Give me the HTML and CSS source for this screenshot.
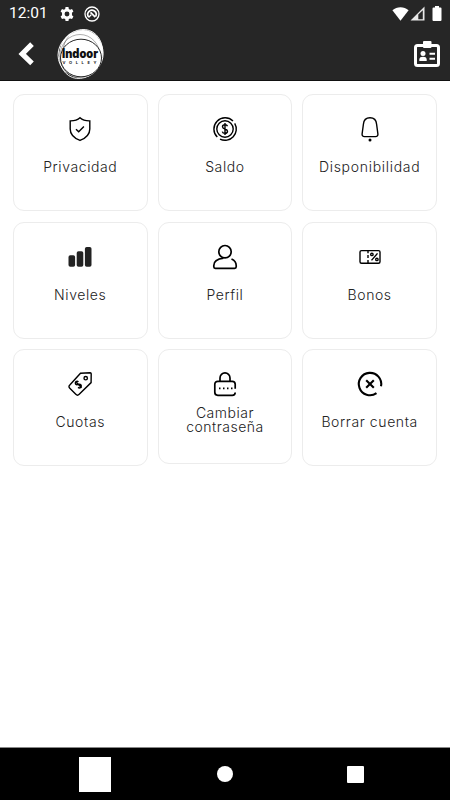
FILE: index.html
```html
<!DOCTYPE html>
<html lang="es">
<head>
    <meta charset="UTF-8">
    <meta name="viewport" content="width=device-width, initial-scale=1.0">
    <title>Indoor</title>
    <link rel="stylesheet" href="styles.css">
</head>
<body>
    <div class="screen">
        <header class="header">
            <!-- Status bar -->
            <div class="status">
                <span class="time">12:01</span>
                <svg class="status-gear" width="14" height="14" viewBox="0 0 24 24"><path fill="#fff" fill-rule="evenodd" d="M9.5 0h5l.6 3.300 2.200 1.200 3.300-1.200L23 7.600l-2.500 2.200v4.400L23 16.400l-2.400 4.300-3.300-1.200-2.200 1.200-.6 3.300h-5l-.6-3.300-2.200-1.200-3.300 1.200L1 16.400l2.500-2.200V9.800L1 7.600l2.400-4.300 3.300 1.200 2.200-1.200zM12 7.800a4.200 4.200 0 1 0 0 8.400 4.200 4.200 0 0 0 0-8.400z"/></svg>
                <svg class="status-dnd" width="16" height="16" viewBox="0 0 16 16" fill="none" stroke="#fff"><circle cx="8" cy="8" r="7" stroke-width="1.300"/><path stroke-width="1.700" d="M4.800 11.200a4.200 4.200 0 1 1 6.900-.8M6.500 6.300l4.800 4.900"/><path stroke-width="1.300" d="M4.800 11.200l2.400-2.400"/></svg>
                <span class="spacer"></span>
                <svg width="17" height="14" viewBox="0 0 17 14"><path fill="#fff" d="M.4 3.300C5-.7 12-.7 16.600 3.300L8.500 13.800z"/></svg>
                <svg class="status-signal" width="15" height="15" viewBox="0 0 15 15"><path fill="#e8e8e8" fill-rule="evenodd" d="M.5 14.500l14-14v14zM8.300 8.500v4.700h4.500V4.200z"/></svg>
                <svg class="status-battery" width="10" height="15" viewBox="0 0 10 15"><path fill="#fff" d="M3 0h4v1.500h1.500a1 1 0 0 1 1 1V14a1 1 0 0 1-1 1h-7a1 1 0 0 1-1-1V2.500a1 1 0 0 1 1-1H3z"/></svg>
            </div>

            <!-- Navigation -->
            <div class="navbar">
                <svg class="back" width="16" height="24" viewBox="0 0 16 24"><path d="M14 2.200L4.200 12l9.800 9.300" fill="none" stroke="#fff" stroke-width="5.200"/></svg>
                <svg class="logo" width="48" height="52" viewBox="0 0 48 52">
                    <ellipse cx="24" cy="26" rx="21.500" ry="24" fill="#fff"/>
                    <ellipse cx="26" cy="24" rx="20" ry="22.500" fill="#fff" stroke="#555" stroke-width=".6"/>
                    <ellipse cx="23.500" cy="26" rx="22.800" ry="22" fill="none" stroke="#fff" stroke-width=".9" transform="rotate(-35 24 26)"/>
                    <ellipse cx="24" cy="26" rx="21" ry="25" fill="none" stroke="#fff" stroke-width=".8" transform="rotate(20 24 26)"/>
                    <ellipse cx="23" cy="28" rx="20" ry="21.500" fill="none" stroke="#777" stroke-width=".6"/>
                    <ellipse cx="24" cy="30" rx="20.500" ry="18.800" fill="#fff" stroke="#262626" stroke-width="1"/>
                    <text class="logo-name" x="5" y="29.500" textLength="36" lengthAdjust="spacingAndGlyphs">Indoor</text>
                    <text class="logo-sub" x="5.500" y="36" textLength="34">VOLLEY</text>
                </svg>
                <span class="spacer"></span>
                <svg class="badge" width="26" height="26" viewBox="0 0 26 26">
                    <rect x="1.500" y="4.500" width="23" height="20" rx="2" fill="none" stroke="#fff" stroke-width="3"/>
                    <rect x="9" y="0" width="8.500" height="7" rx="1" fill="#fff"/>
                    <circle cx="9" cy="12.500" r="2.500" fill="#fff"/>
                    <path d="M5.300 20v-1.500c0-2 1.700-2.700 3.700-2.700s3.700.7 3.700 2.700V20z" fill="#fff"/>
                    <path d="M15.500 12.800h5.500M15.500 17.800h5.500" stroke="#fff" stroke-width="2"/>
                </svg>
            </div>
        </header>

        <!-- Menu -->
        <main class="menu">
            <div class="card">
                <svg class="icon" viewBox="0 0 24 24"><path d="M12 .8c2.600 2.400 6 3.200 9.800 3.100v8c0 5-3.800 9.100-9.800 11.500C6 21 2.200 16.900 2.200 11.900v-8C6 4 9.400 3.200 12 .8z"/><path d="M8 12.200l2.700 2.600 5.200-5.200"/></svg>
                <span class="label">Privacidad</span>
            </div>
            <div class="card">
                <svg class="icon" viewBox="0 0 24 24"><circle cx="12" cy="12" r="8.200"/><path d="M4.300 20.100A11.200 11.200 0 0 1 20 4M21.700 6.400A11.200 11.200 0 0 1 7 22.100"/><path d="M14.500 9.200c-.3-1-1.300-1.500-2.500-1.500-1.500 0-2.500.8-2.500 2 0 3 5 1.600 5 4.500 0 1.300-1 2.100-2.500 2.100-1.300 0-2.400-.6-2.700-1.700M12 6v12"/></svg>
                <span class="label">Saldo</span>
            </div>
            <div class="card">
                <svg class="icon" viewBox="0 0 24 24"><path d="M12 .8c-4 0-6.300 2.700-6.600 6.500L4.100 17c-.2 1.600.7 2.600 2.300 2.600h11.200c1.600 0 2.500-1 2.300-2.600l-1.300-9.700C18.300 3.500 16 .8 12 .8z"/><circle class="fill" cx="12" cy="23" r="1.500"/></svg>
                <span class="label wide">Disponibilidad</span>
            </div>
            <div class="card">
                <svg class="icon bars" viewBox="0 0 24 24"><rect x=".5" y="10.300" width="6.600" height="11.500" rx="1.800"/><rect x="8.700" y="6.200" width="6.600" height="15.600" rx="1.800"/><rect x="16.900" y="2" width="6.600" height="19.800" rx="1.800"/></svg>
                <span class="label">Niveles</span>
            </div>
            <div class="card">
                <svg class="icon bold" viewBox="0 0 24 24"><circle cx="12" cy="6.700" r="6.200"/><path d="M10.500 13.100C5 13.700.8 16.300.8 20.500v1.300c0 1 .6 1.500 1.500 1.500h19.400c.9 0 1.500-.5 1.500-1.500v-1.300c0-3-1.700-5.200-4.700-6.500"/></svg>
                <span class="label">Perfil</span>
            </div>
            <div class="card">
                <svg class="icon" viewBox="0 0 24 24"><rect x="2" y="5.600" width="20" height="12.600" rx="1.500"/><path d="M10 5.600v2.600M10 10v3M10 15v3M13.500 15.400l6-7"/><circle cx="13.900" cy="9.400" r="1.200"/><circle cx="18.900" cy="14.400" r="1.200"/></svg>
                <span class="label">Bonos</span>
            </div>
            <div class="card">
                <svg class="icon" viewBox="0 0 24 24"><path d="M12.500 1.200L22.200.8c.7 0 1 .3 1 1l-.1 8.800-11.900 11.700c-1.100 1.100-2.300 1.100-3.400 0l-6-6c-1.100-1.100-1.100-2.300 0-3.400z"/><circle cx="17.700" cy="6.200" r="1.700"/><path d="M10.500 9.700c-1-.7-2-.5-2.600.1-.8.800-.7 1.900.1 2.600 1.500 1.200 3-1.300 4.600.1 1 .9.800 2.100.1 2.800s-1.800.8-2.700.1M7.400 9.200l6.200 6.500"/></svg>
                <span class="label">Cuotas</span>
            </div>
            <div class="card short">
                <svg class="icon bold" viewBox="0 0 24 24"><path d="M7 9.300V5.900a5 5 0 0 1 10 0v3.400M22.200 16.800v-4.500c0-1.800-1.200-3-3-3H4.800c-1.800 0-3 1.200-3 3v8c0 1.800 1.200 3 3 3h14.400c1.800 0 3-1 3-2.800"/><path d="M6 16.300h1.500M10 16.300h1.500M14 16.300h1.500M18 16.300h1.500"/></svg>
                <span class="label two">Cambiar contraseña</span>
            </div>
            <div class="card">
                <svg class="icon heavy" viewBox="0 0 24 24"><path d="M23 14.300A11.200 11.200 0 1 0 18.500 21.200M8.200 8.200l7.600 7.600M15.800 8.200l-7.600 7.600"/></svg>
                <span class="label">Borrar cuenta</span>
            </div>
        </main>

        <!-- Android buttons -->
        <footer class="softkeys">
            <div class="key"><span class="key-back"></span></div>
            <div class="key"><span class="key-home"></span></div>
            <div class="key"><span class="key-recent"></span></div>
        </footer>
    </div>
</body>
</html>
```
FILE: styles.css
```css
body {
    margin: 0;
    background-color: #fff;
    font-family: Inter, sans-serif;
}

.screen {
    display: flex;
    flex-direction: column;
    height: 800px;
}

.header {
    box-sizing: border-box;
    height: 81px;
    background-color: #262626;
    border-bottom: 1px solid #111;
    color: #fff;
}

.spacer {
    flex-grow: 1;
}

.status {
    display: flex;
    align-items: center;
    height: 27px;
    padding: 0 8px 0 9px;
}

.time {
    width: 51px;
    font-family: Roboto, sans-serif;
    font-size: 15.5px;
    line-height: 27px;
}

.status-dnd {
    margin-left: 10px;
}

.status-signal {
    margin-left: 1px;
}

.status-battery {
    margin-left: 7px;
}

.navbar {
    display: flex;
    align-items: center;
    height: 53px;
    padding: 0 10px 0 18px;
}

.logo {
    margin-left: 23px;
}

.logo-name {
    font-family: Inter, sans-serif;
    font-size: 12.5px;
    font-weight: 900;
    fill: #111;
}

.logo-sub {
    font-family: Inter, sans-serif;
    font-size: 4px;
    font-weight: 700;
    fill: #222;
}

.menu {
    display: grid;
    grid-template-columns: repeat(3, 134.5px);
    grid-auto-rows: 117px;
    column-gap: 10.2px;
    row-gap: 10.5px;
    flex-grow: 1;
    padding: 13px 13px 0;
    align-content: start;
}

.card {
    box-sizing: border-box;
    display: flex;
    flex-direction: column;
    align-items: center;
    height: 117px;
    padding-top: 22px;
    border: 1px solid #ececec;
    border-radius: 11px;
}

.card.short {
    height: 114.5px;
}

.icon {
    width: 24px;
    height: 24px;
    overflow: visible;
    fill: none;
    stroke: #000;
    stroke-width: 1.4;
}

.icon.bold {
    stroke-width: 1.7;
}

.icon.heavy {
    stroke-width: 2.1;
}

.icon.bars {
    fill: #222;
    stroke: none;
}

.icon .fill {
    fill: #000;
    stroke: none;
}

.label {
    margin-top: 12px;
    font-size: 14px;
    font-weight: 300;
    line-height: 28px;
    letter-spacing: 0.6px;
    text-align: center;
    color: #222;
}

.label.wide {
    letter-spacing: 0.7px;
}

.label.two {
    width: 100px;
    margin-top: 10px;
    line-height: 14px;
    letter-spacing: 0.5px;
}

.softkeys {
    display: flex;
    box-sizing: border-box;
    height: 53px;
    padding: 0 30px;
    border-top: 1px solid #888;
    background-color: #000;
}

.key {
    display: flex;
    flex: 1;
    align-items: center;
    justify-content: center;
}

.key-back {
    width: 32px;
    height: 35px;
    background-color: #fff;
}

.key-home {
    width: 16px;
    height: 16px;
    border-radius: 50%;
    background-color: #fff;
}

.key-recent {
    width: 17px;
    height: 17px;
    border-radius: 1px;
    background-color: #fff;
}
```
